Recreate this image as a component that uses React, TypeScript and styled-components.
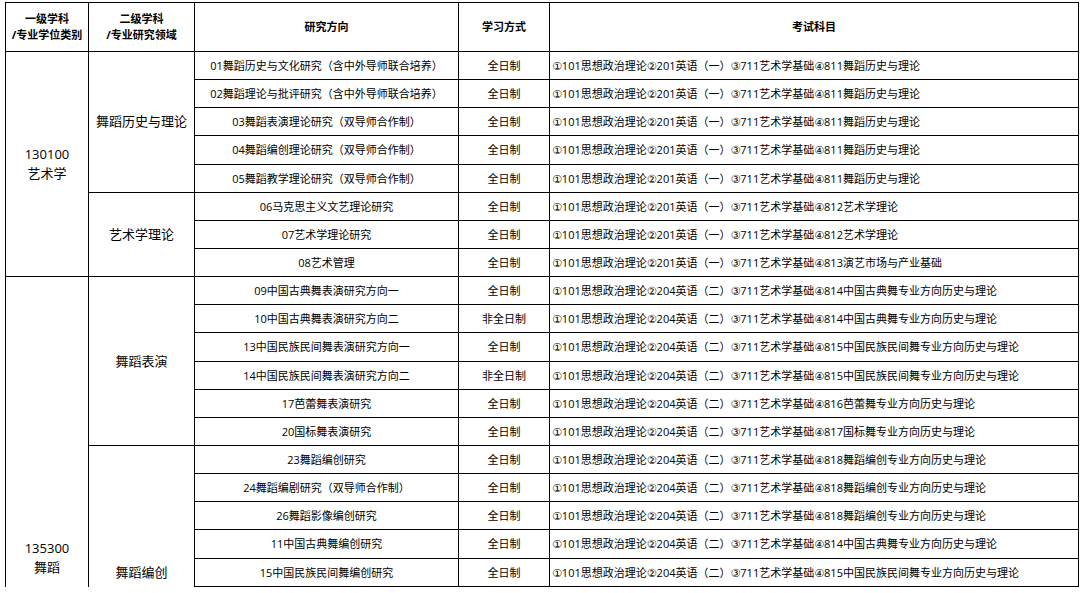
import React from 'react';
import styled, { createGlobalStyle } from 'styled-components';

const GlobalStyle = createGlobalStyle`
    html, body {
        margin: 0;
        padding: 0;
        background: #ffffff;
    }
    body {
        font-family: "Open Sans", "DejaVu Sans", "Noto Sans CJK SC", sans-serif;
        color: #000000;
    }
`;

const Page = styled.div`
    height: 587px;
    overflow: hidden;
    padding: 2px 0 0 5px;
    box-sizing: border-box;
`;

const Table = styled.table`
    width: 1073px;
    table-layout: fixed;
    border-collapse: collapse;
    font-size: 11px;
`;

const HeadRow = styled.tr`
    height: 49px;
`;

const Row = styled.tr`
    height: 28.15px;
`;

const HeadCell = styled.th`
    border: 1px solid #000;
    padding: 0 2px;
    font-size: 11px;
    font-weight: 700;
    line-height: 16px;
    text-align: center;
    vertical-align: middle;
`;

const GroupCell = styled.td`
    border: 1px solid #000;
    padding: 0 2px;
    font-size: 13px;
    line-height: 19px;
    text-align: center;
    vertical-align: middle;
`;

const Cell = styled.td<{ $left?: boolean }>`
    border: 1px solid #000;
    padding: 0 2px;
    line-height: 15px;
    white-space: nowrap;
    text-align: ${(p) => (p.$left ? 'left' : 'center')};
    vertical-align: middle;
`;

type Direction = { dir: string; mode: string; exam: string };
type Sub = { name: string; rows: Direction[] };
type Group = { code: string; name: string; subs: Sub[] };

const P1 = '①101思想政治理论②201英语（一）③711艺术学基础④';
const P2 = '①101思想政治理论②204英语（二）③711艺术学基础④';
const FULL = '全日制';
const PART = '非全日制';

// rows past the bottom edge of the picture, kept so the merged cells centre as in the original
const blank = (n: number): Direction[] => Array.from({ length: n }, () => ({ dir: '', mode: '', exam: '' }));

const groups: Group[] = [
    {
        code: '130100',
        name: '艺术学',
        subs: [
            {
                name: '舞蹈历史与理论',
                rows: [
                    { dir: '01舞蹈历史与文化研究（含中外导师联合培养）', mode: FULL, exam: P1 + '811舞蹈历史与理论' },
                    { dir: '02舞蹈理论与批评研究（含中外导师联合培养）', mode: FULL, exam: P1 + '811舞蹈历史与理论' },
                    { dir: '03舞蹈表演理论研究（双导师合作制）', mode: FULL, exam: P1 + '811舞蹈历史与理论' },
                    { dir: '04舞蹈编创理论研究（双导师合作制）', mode: FULL, exam: P1 + '811舞蹈历史与理论' },
                    { dir: '05舞蹈教学理论研究（双导师合作制）', mode: FULL, exam: P1 + '811舞蹈历史与理论' },
                ],
            },
            {
                name: '艺术学理论',
                rows: [
                    { dir: '06马克思主义文艺理论研究', mode: FULL, exam: P1 + '812艺术学理论' },
                    { dir: '07艺术学理论研究', mode: FULL, exam: P1 + '812艺术学理论' },
                    { dir: '08艺术管理', mode: FULL, exam: P1 + '813演艺市场与产业基础' },
                ],
            },
        ],
    },
    {
        code: '135300',
        name: '舞蹈',
        subs: [
            {
                name: '舞蹈表演',
                rows: [
                    { dir: '09中国古典舞表演研究方向一', mode: FULL, exam: P2 + '814中国古典舞专业方向历史与理论' },
                    { dir: '10中国古典舞表演研究方向二', mode: PART, exam: P2 + '814中国古典舞专业方向历史与理论' },
                    { dir: '13中国民族民间舞表演研究方向一', mode: FULL, exam: P2 + '815中国民族民间舞专业方向历史与理论' },
                    { dir: '14中国民族民间舞表演研究方向二', mode: PART, exam: P2 + '815中国民族民间舞专业方向历史与理论' },
                    { dir: '17芭蕾舞表演研究', mode: FULL, exam: P2 + '816芭蕾舞专业方向历史与理论' },
                    { dir: '20国标舞表演研究', mode: FULL, exam: P2 + '817国标舞专业方向历史与理论' },
                ],
            },
            {
                name: '舞蹈编创',
                rows: [
                    { dir: '23舞蹈编创研究', mode: FULL, exam: P2 + '818舞蹈编创专业方向历史与理论' },
                    { dir: '24舞蹈编剧研究（双导师合作制）', mode: FULL, exam: P2 + '818舞蹈编创专业方向历史与理论' },
                    { dir: '26舞蹈影像编创研究', mode: FULL, exam: P2 + '818舞蹈编创专业方向历史与理论' },
                    { dir: '11中国古典舞编创研究', mode: FULL, exam: P2 + '814中国古典舞专业方向历史与理论' },
                    { dir: '15中国民族民间舞编创研究', mode: FULL, exam: P2 + '815中国民族民间舞专业方向历史与理论' },
                    ...blank(4),
                ],
            },
            { name: '', rows: blank(5) },
        ],
    },
];

const App: React.FC = () => {
    const body: React.ReactNode[] = [];

    groups.forEach((g) => {
        const groupSpan = g.subs.reduce((n, s) => n + s.rows.length, 0);
        g.subs.forEach((s, si) => {
            s.rows.forEach((r, ri) => {
                body.push(
                    <Row key={`${g.code}-${si}-${ri}`}>
                        {si === 0 && ri === 0 && (
                            <GroupCell rowSpan={groupSpan}>
                                {g.code}
                                <br />
                                {g.name}
                            </GroupCell>
                        )}
                        {ri === 0 && <GroupCell rowSpan={s.rows.length}>{s.name}</GroupCell>}
                        <Cell>{r.dir}</Cell>
                        <Cell>{r.mode}</Cell>
                        <Cell $left>{r.exam}</Cell>
                    </Row>
                );
            });
        });
    });

    return (
        <Page>
            <GlobalStyle />
            <Table>
                <colgroup>
                    <col style={{ width: 83 }} />
                    <col style={{ width: 106 }} />
                    <col style={{ width: 264 }} />
                    <col style={{ width: 91 }} />
                    <col style={{ width: 529 }} />
                </colgroup>
                <thead>
                    <HeadRow>
                        <HeadCell>
                            一级学科
                            <br />
                            /专业学位类别
                        </HeadCell>
                        <HeadCell>
                            二级学科
                            <br />
                            /专业研究领域
                        </HeadCell>
                        <HeadCell>研究方向</HeadCell>
                        <HeadCell>学习方式</HeadCell>
                        <HeadCell>考试科目</HeadCell>
                    </HeadRow>
                </thead>
                <tbody>{body}</tbody>
            </Table>
        </Page>
    );
};

export default App;
